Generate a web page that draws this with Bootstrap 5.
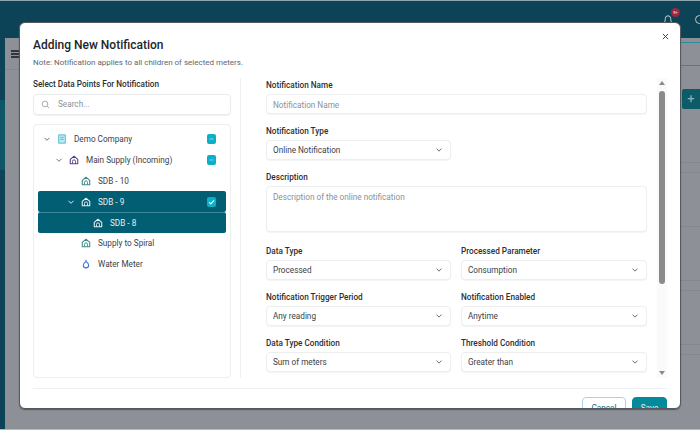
<!DOCTYPE html>
<html lang="en">
<head>
  <meta charset="UTF-8" />
  <title>Adding New Notification</title>
  <link href="https://cdn.jsdelivr.net/npm/bootstrap@5.3.0/dist/css/bootstrap.min.css" rel="stylesheet" />
  <style>
    html, body { height: 100%; }
    body { font-family: Roboto, "Noto Sans", sans-serif; background: #8d9097; overflow: hidden; position: relative; color: #2b2f33; }
    .top-strip { height: 38px; background: #0d4356; border-top: 1px solid #8fa6ad; }
    .page-area { height: 391px; }
    .page-end { height: 1px; background: #b5b8bc; }
    .side-strip { width: 5px; background: #0d4356; padding-top: 62px; }
    .side-active { height: 70px; background: #0e5666; }
    .page-main { background: #8d9097; }
    .ham-row { height: 32px; padding-left: 6px; border-bottom: 1px solid #84878e; }
    .ham { width: 8px; height: 8px; border-top: 2px solid #33363b; border-bottom: 2px solid #33363b; position: relative; }
    .ham::after { content: ""; position: absolute; left: 0; right: 0; top: 1px; height: 2px; background: #33363b; }
    .page-right { width: 19px; }
    .page-tabs { height: 24px; border-top: 1px solid #2d8a99; border-bottom: 1px solid #2d8a99; margin-top: 4px; }
    .page-plus { width: 18px; height: 20px; margin: 23px 0 0 1px; background: #0e5b68; color: #8fb4ba; font-size: 13px; line-height: 20px; text-align: center; border-radius: 2px 0 0 2px; }
    .page-line { height: 1px; background: #84878e; margin-top: 53px; }
    .page-line.tight { margin-top: 9px; }
    .bell { position: absolute; left: 663px; top: 13px; }
    .bell-count { position: absolute; left: 671px; top: 8px; width: 9px; height: 9px; border-radius: 50%; background: #9d2840; color: #e9c9cf; font-size: 4px; line-height: 9px; text-align: center; font-weight: 700; }
    .user-dot { position: absolute; left: 695px; top: 15px; width: 9px; height: 9px; border: 1px solid #b9c7cc; border-radius: 50%; }

    .notif-modal { position: absolute; left: 19px; top: 22px; width: 662px; height: 387px; background: #fff; border: 1px solid #55585c; border-radius: 6px; box-shadow: 0 1px 1px #55585c; overflow: hidden; padding: 0 13px; }
    .notif-title { font-size: 12px; font-weight: 500; color: #212529; margin: 14px 0 0; line-height: 16px; }
    .notif-note { font-size: 8px; color: #5f666d; margin: 4px 0 0; line-height: 12px; }
    .notif-x { position: absolute; right: 11px; top: 10px; width: 7px; height: 7px; }
    .notif-body { height: 300px; margin-top: 9px; }
    .left-pane { width: 198px; }
    .split { width: 1px; background: #eff0f1; margin: 0 25px 0 9px; }
    .right-pane { width: 381px; padding-top: 1px; }
    .lbl { font-size: 8.2px; font-weight: 500; color: #2b2f33; line-height: 12px; margin: 0; }
    .search-box { height: 21px; border: 1px solid #e9ebed; border-radius: 4px; margin-top: 4px; padding-left: 7px; box-shadow: 0 1px 1px #f0f1f2; }
    .search-box span { color: #8b9197; font-size: 8.2px; }
    .tree-box { height: 254px; margin-top: 9px; border: 1px solid #eceef0; border-radius: 4px; padding: 4px; }
    .tree-row { height: 20.8px; font-size: 8.2px; color: #3c4146; }
    .tree-row.picked { background: #025f73; color: #e3eef1; border-radius: 2px; }
    .tree-row.picked + .tree-row.picked { border-top: 1px solid #3d8a9a; }
    .lvl0 { padding-left: 5px; }
    .lvl1 { padding-left: 17px; }
    .lvl2 { padding-left: 43px; }
    .lvl1b { padding-left: 29px; }
    .lvl3 { padding-left: 55px; }
    .chev { width: 8px; margin-right: 6px; }
    .tree-ico { width: 10px; height: 10px; margin-right: 7px; }
    .tick { width: 9px; height: 10px; background: #0cafc9; border-radius: 2px; margin-right: 10px; }
    .tick svg { display: block; width: 9px; height: 10px; }
    .form-control.fine, .form-select.fine { height: 20px; min-height: 0; font-size: 8.2px; color: #3c4146; border: 1px solid #eceef0; border-radius: 4px; padding: 1px 6px 0; box-shadow: 0 1px 1px #f3f4f5; margin-top: 3px; }
    .form-select.fine { background-size: 8px 6px; background-position: right 7px center; padding-right: 18px; }
    .fine::placeholder { color: #8b9197; opacity: 1; }
    textarea.form-control.fine { height: 46px; padding-top: 4px; resize: none; }
    .type-sel { width: 185px; }
    .gap-lbl { margin-top: 11px; }
    .form-row { display: grid; grid-template-columns: 185px 186px; column-gap: 10px; margin-top: 2px; }
    .fake-scroll { width: 10px; background: #fafafa; margin-left: 10px; position: relative; }
    .scroll-up { position: absolute; left: 2px; top: 3px; border: 3px solid transparent; border-bottom: 4px solid #8a8a8a; border-top: 0; }
    .scroll-down { position: absolute; left: 2px; bottom: 3px; border: 3px solid transparent; border-top: 4px solid #8a8a8a; border-bottom: 0; }
    .scroll-thumb { position: absolute; left: 2px; top: 13px; width: 6px; height: 193px; background: #8a8a8a; border-radius: 3px; }
    .notif-foot { border-top: 1px solid #f0f1f2; margin-top: 10px; padding-top: 8px; column-gap: 6px; }
    .foot-btn { height: 22px; font-size: 8.2px; padding: 0; border-radius: 4px; line-height: 20px; }
    .foot-cancel { width: 44px; background: #fff; color: #0a6c7d; border: 1px solid #a5d8de; }
    .foot-save { width: 35px; background: #048a9a; color: #e8f4f5; border: 1px solid #048a9a; }
  </style>
</head>
<body>
  <svg width="0" height="0" class="d-block position-absolute">
    <symbol id="i-chev" viewBox="0 0 8 8"><path d="M1.500 2.800 4 5.300 6.500 2.800" fill="none" stroke="currentColor" stroke-width="1"/></symbol>
    <symbol id="i-home" viewBox="0 0 12 12"><path d="M1.500 5.200 6 1.500l4.500 3.700v5.300h-9z" fill="none" stroke="currentColor" stroke-width="1.300" stroke-linejoin="round"/><path d="M4.200 10.400V7.600a1.800 1.800 0 0 1 3.600 0v2.800" fill="none" stroke="currentColor" stroke-width="1.100"/></symbol>
    <symbol id="i-build" viewBox="0 0 12 12"><path d="M2 1h8v10H2z" fill="#bfeaf0" stroke="#38b6c9" stroke-width="1"/><path d="M4 4h4M4 6.500h4" stroke="#38b6c9" stroke-width="1"/></symbol>
    <symbol id="i-drop" viewBox="0 0 12 12"><path d="M6 1v2M6 3c2.400 1.600 3.200 3 3.200 4.400a3.200 3.200 0 0 1-6.400 0C2.800 6 3.600 4.600 6 3z" fill="none" stroke="#3f74d8" stroke-width="1.300"/></symbol>
    <symbol id="i-search" viewBox="0 0 12 12"><circle cx="5.300" cy="5.300" r="3.800" fill="none" stroke="#8b9197" stroke-width="1"/><path d="m8.200 8.200 2.600 2.600" stroke="#8b9197" stroke-width="1"/></symbol>
    <symbol id="i-dash" viewBox="0 0 9 10"><path d="M2.500 5h4" stroke="#7fd6e4" stroke-width="1"/></symbol>
    <symbol id="i-check" viewBox="0 0 9 10"><path d="m2 5.200 1.800 1.700L7 3.400" fill="none" stroke="#fff" stroke-width="1.100"/></symbol>
  </svg>

  <div class="top-strip"></div>
  <div class="page-area d-flex">
    <div class="side-strip"><div class="side-active"></div></div>
    <div class="page-main flex-grow-1 d-flex">
      <div class="ham-row flex-grow-1 d-flex align-items-center"><div class="ham"></div></div>
      <div class="page-right flex-shrink-0">
        <div class="page-tabs"></div>
        <div class="page-plus">+</div>
        <div class="page-line"></div>
        <div class="page-line tight"></div>
        <div class="page-line"></div>
        <div class="page-line"></div>
        <div class="page-line tight"></div>
        <div class="page-line"></div>
        <div class="page-line tight"></div>
      </div>
    </div>
  </div>
  <div class="page-end"></div>

  <svg class="bell" width="10" height="11" viewBox="0 0 10 11"><path d="M1 9.500c1-1 1.300-2 1.300-4a2.700 2.700 0 0 1 5.400 0c0 2 .3 3 1.300 4z" fill="none" stroke="#c6d2d6" stroke-width="1"/></svg>
  <div class="bell-count">9+</div>
  <div class="user-dot"></div>

  <div class="notif-modal">
    <h5 class="notif-title">Adding New Notification</h5>
    <p class="notif-note">Note: Notification applies to all children of selected meters.</p>
    <svg class="notif-x" viewBox="0 0 8 8"><path d="M1 1l6 6M7 1 1 7" stroke="#3a3f44" stroke-width="1.100"/></svg>

    <div class="notif-body d-flex">
      <div class="left-pane flex-shrink-0">
        <p class="lbl">Select Data Points For Notification</p>
        <div class="search-box d-flex align-items-center gap-2">
          <svg width="9" height="9"><use href="#i-search"/></svg>
          <span>Search...</span>
        </div>
        <div class="tree-box">
          <div class="tree-row lvl0 d-flex align-items-center">
            <svg class="chev text-secondary" height="8"><use href="#i-chev"/></svg>
            <svg class="tree-ico"><use href="#i-build"/></svg>Demo Company
            <span class="tick ms-auto"><svg><use href="#i-dash"/></svg></span>
          </div>
          <div class="tree-row lvl1 d-flex align-items-center">
            <svg class="chev text-secondary" height="8"><use href="#i-chev"/></svg>
            <svg class="tree-ico" style="color:#5b3f8f"><use href="#i-home"/></svg>Main Supply (Incoming)
            <span class="tick ms-auto"><svg><use href="#i-dash"/></svg></span>
          </div>
          <div class="tree-row lvl2 d-flex align-items-center">
            <svg class="tree-ico" style="color:#3f8a85"><use href="#i-home"/></svg>SDB - 10
          </div>
          <div class="tree-row picked lvl1b d-flex align-items-center">
            <svg class="chev" height="8"><use href="#i-chev"/></svg>
            <svg class="tree-ico"><use href="#i-home"/></svg>SDB - 9
            <span class="tick ms-auto"><svg><use href="#i-check"/></svg></span>
          </div>
          <div class="tree-row picked lvl3 d-flex align-items-center">
            <svg class="tree-ico"><use href="#i-home"/></svg>SDB - 8
          </div>
          <div class="tree-row lvl2 d-flex align-items-center">
            <svg class="tree-ico" style="color:#3f8a85"><use href="#i-home"/></svg>Supply to Spiral
          </div>
          <div class="tree-row lvl2 d-flex align-items-center">
            <svg class="tree-ico"><use href="#i-drop"/></svg>Water Meter
          </div>
        </div>
      </div>

      <div class="split flex-shrink-0"></div>

      <div class="right-pane flex-shrink-0">
        <p class="lbl">Notification Name</p>
        <input class="form-control fine" placeholder="Notification Name" />
        <p class="lbl gap-lbl">Notification Type</p>
        <select class="form-select fine type-sel"><option>Online Notification</option></select>
        <p class="lbl gap-lbl">Description</p>
        <textarea class="form-control fine" placeholder="Description of the online notification"></textarea>
        <div class="form-row">
          <div><p class="lbl gap-lbl">Data Type</p><select class="form-select fine"><option>Processed</option></select></div>
          <div><p class="lbl gap-lbl">Processed Parameter</p><select class="form-select fine"><option>Consumption</option></select></div>
          <div><p class="lbl gap-lbl">Notification Trigger Period</p><select class="form-select fine"><option>Any reading</option></select></div>
          <div><p class="lbl gap-lbl">Notification Enabled</p><select class="form-select fine"><option>Anytime</option></select></div>
          <div><p class="lbl gap-lbl">Data Type Condition</p><select class="form-select fine"><option>Sum of meters</option></select></div>
          <div><p class="lbl gap-lbl">Threshold Condition</p><select class="form-select fine"><option>Greater than</option></select></div>
        </div>
      </div>

      <div class="fake-scroll flex-shrink-0">
        <span class="scroll-up"></span>
        <span class="scroll-thumb"></span>
        <span class="scroll-down"></span>
      </div>
    </div>

    <div class="notif-foot d-flex justify-content-end">
      <button class="btn foot-btn foot-cancel">Cancel</button>
      <button class="btn foot-btn foot-save">Save</button>
    </div>
  </div>
</body>
</html>
